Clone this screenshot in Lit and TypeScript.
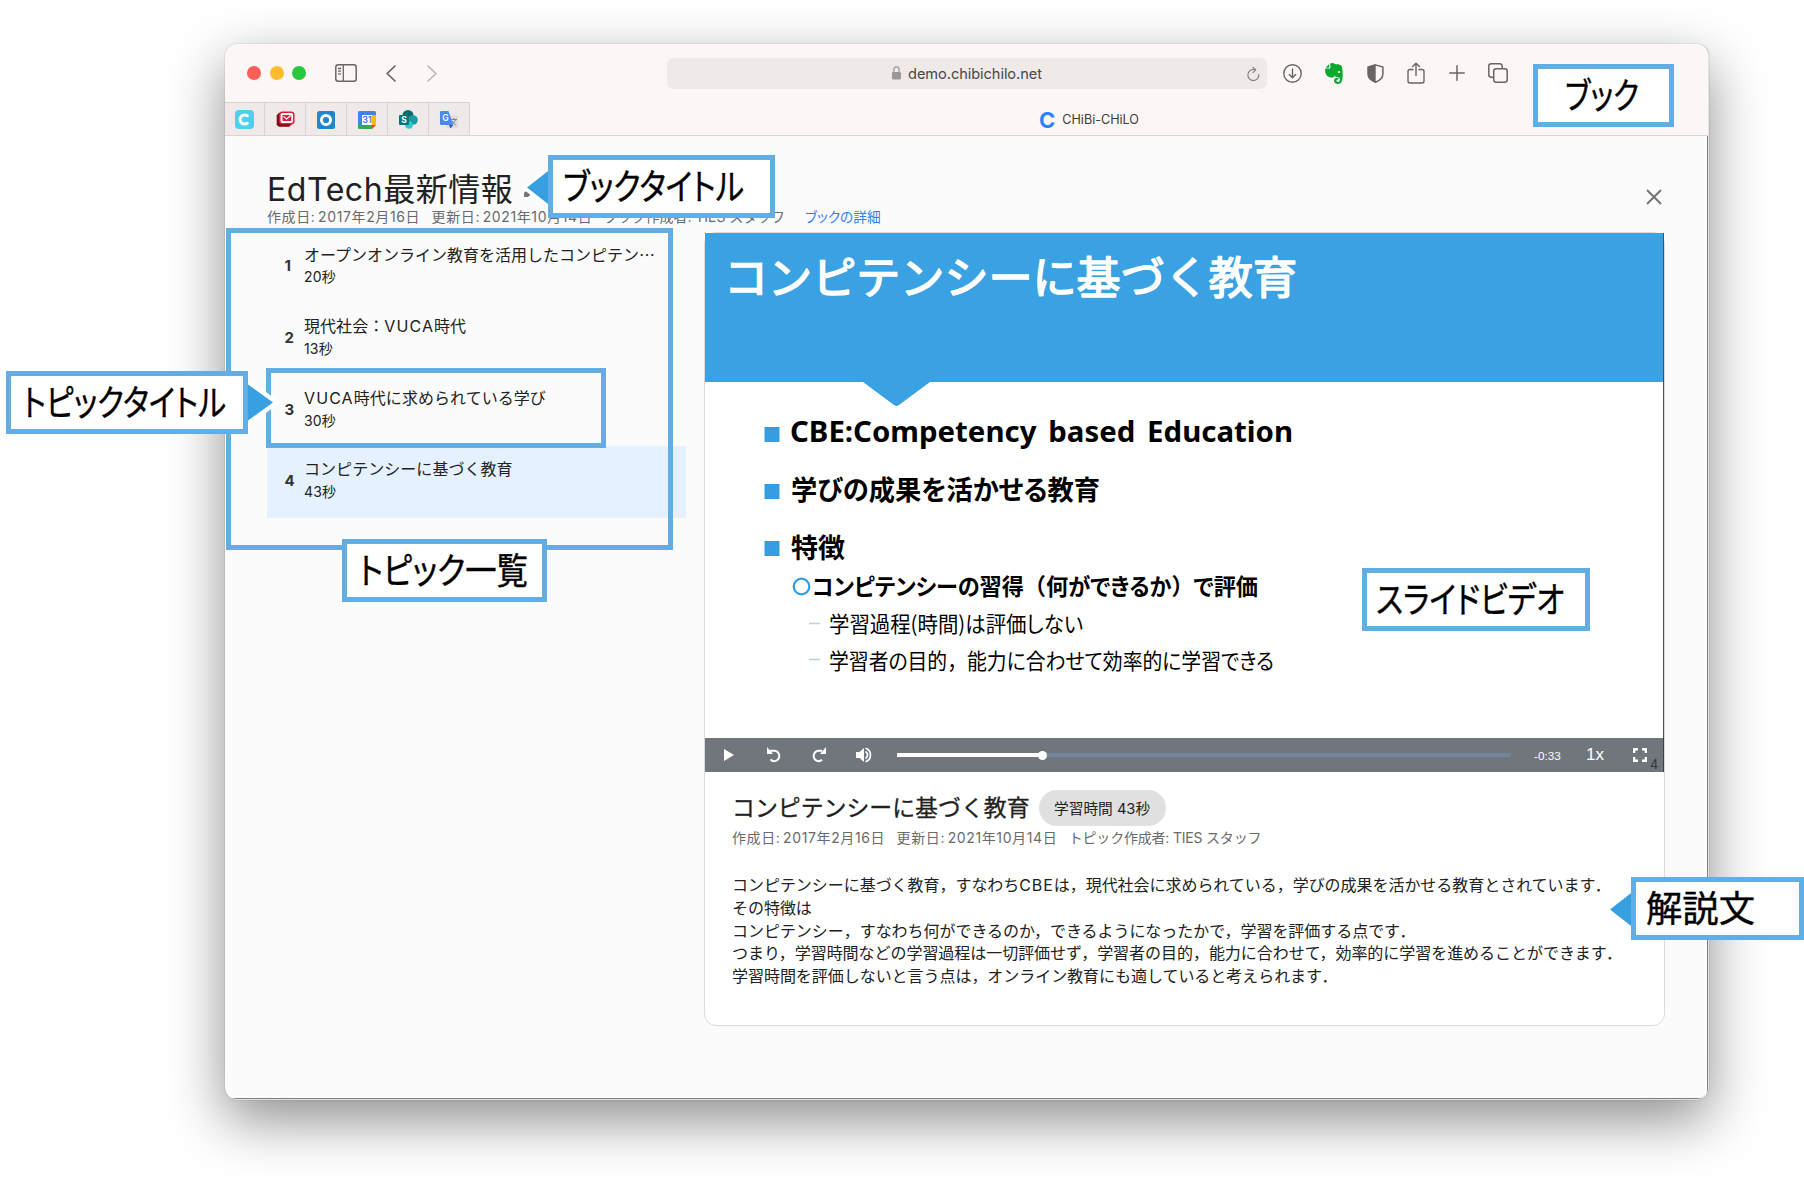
import { LitElement, html, svg, css } from "lit";
import { customElement, property } from "lit/decorators.js";
import { classMap } from "lit/directives/class-map.js";

interface Topic {
  title: string;
  time: string;
}

const TOPICS: Topic[] = [
  { title: "オープンオンライン教育を活用したコンピテン…", time: "20秒" },
  { title: "現代社会：VUCA時代", time: "13秒" },
  { title: "VUCA時代に求められている学び", time: "30秒" },
  { title: "コンピテンシーに基づく教育", time: "43秒" },
];

const DESCRIPTION = [
  "コンピテンシーに基づく教育，すなわちCBEは，現代社会に求められている，学びの成果を活かせる教育とされています．",
  "その特徴は",
  "コンピテンシー，すなわち何ができるのか，できるようになったかで，学習を評価する点です．",
  "つまり，学習時間などの学習過程は一切評価せず，学習者の目的，能力に合わせて，効率的に学習を進めることができます．",
  "学習時間を評価しないと言う点は，オンライン教育にも適していると考えられます．",
];

/* Latin capitals inside Japanese text get a little extra tracking */
const withLatin = (t: string) =>
  t.split(/([A-Z]{2,})/).map((p) => (/^[A-Z]{2,}$/.test(p) ? html`<span class="caps">${p}</span>` : p));

/* Safari window chrome: toolbar, address field and pinned tabs */
@customElement("browser-chrome")
class BrowserChrome extends LitElement {
  static styles = css`
    :host {
      display: block;
      background: #fcf6f6;
      border-bottom: 1px solid #d9d5d5;
      font-family: Inter, "Noto Sans CJK JP", sans-serif;
    }
    svg { display: block; flex: none; overflow: visible; }
    .toolbar { display: flex; align-items: center; height: 58px; padding-left: 22px; }
    .lights { display: flex; gap: 8.700px; margin-right: 29px; }
    .light { width: 14px; height: 14px; border-radius: 50%; }
    .red { background: #fe5f57; }
    .amber { background: #febc2e; }
    .green { background: #28c840; }
    .nav { display: flex; align-items: center; gap: 29px; width: 331.600px; }
    .address {
      box-sizing: border-box;
      display: flex; align-items: center; justify-content: center; position: relative;
      width: 600px; height: 31px; border-radius: 7px; background: #efe9e8;
      color: #4b4747; font-size: 14.600px; gap: 7px;
    }
    .address .host { letter-spacing: -0.060px; padding-top: 2px; }
    .reload { position: absolute; right: 7px; top: 8px; }
    .actions { display: flex; align-items: center; margin-left: 16px; gap: 23.500px; }
    .tabs { display: flex; height: 33px; }
    .pin {
      box-sizing: border-box; display: flex; align-items: center; justify-content: center;
      width: 41px; height: 33px; background: #efe9e8; padding-top: 1px;
      border-top: 1px solid #d8d2d2; border-right: 1px solid #d8d2d2;
    }
    .pin:first-child { width: 40px; padding-right: 1px; }
    .active {
      flex: 1; display: flex; align-items: center; justify-content: center; gap: 7px;
      font-size: 12.600px; color: #3f3c3c; padding-top: 2px;
    }
    .mark { font-weight: 700; font-size: 22px; line-height: 20px; color: #2f80fb; }
  `;

  render() {
    const s = "#6b6464";
    return html`
      <div class="toolbar">
        <div class="lights">
          <div class="light red"></div><div class="light amber"></div><div class="light green"></div>
        </div>
        <div class="nav">
          <svg width="22" height="18" viewBox="0 0 22 18" fill="none" stroke=${s} stroke-width="1.5">
            <rect x=".8" y=".8" width="20.4" height="16.4" rx="2.5" />
            <path d="M8.3 1v16M3 4.5h3M3 7.2h3M3 9.9h3" stroke-width="1.3" />
          </svg>
          <svg width="10" height="17" viewBox="0 0 10 17" fill="none" stroke=${s} stroke-width="1.7" stroke-linecap="round"><path d="M9 1 1.2 8.5 9 16" /></svg>
          <svg width="10" height="17" viewBox="0 0 10 17" fill="none" stroke="#bcb6b6" stroke-width="1.7" stroke-linecap="round"><path d="M3 1l7.800 7.500L3 16" /></svg>
        </div>
        <div class="address">
          <svg width="9" height="14" viewBox="0 0 9 14"><rect x="0" y="6" width="9" height="7.500" rx="1.300" fill="#9c9797" /><path d="M1.900 6.500V3.800a2.600 2.900 0 0 1 5.200 0v2.700" fill="none" stroke="#9c9797" stroke-width="1.200" /></svg>
          <span class="host">demo.chibichilo.net</span>
          <svg class="reload" width="13" height="16" viewBox="0 0 13 16" fill="none" stroke="#827c7c" stroke-width="1.100" stroke-linecap="round"><path d="M11.800 8.200A5.500 5.500 0 1 1 8.200 3.900M5.800 1.400l2.900 2.500-2.700 2.700" /></svg>
        </div>
        <div class="actions">
          <svg width="19" height="19" viewBox="0 0 19 19" fill="none" stroke=${s} stroke-width="1.400" stroke-linecap="round"><circle cx="9.500" cy="9.500" r="8.700" /><path d="M9.500 5v8.500M6.300 10.500l3.200 3.200 3.200-3.200" /></svg>
          <svg width="18" height="21" viewBox="0 0 18 21">
            <path fill="#0aa82f" d="M5.300.600C6.200-.200 9-.200 9.600 1c2 .2 5 .4 6.300 1.200.9.700 1.500 3.400 1.700 6.300.3 4.200-.1 8.300-1 10.300-.8 1.700-2 2.100-3.800 2.100-2.500 0-3.800-1.300-3.800-3.200 0-1.800 1.300-3 3.300-3 .9 0 1.400.3 1.400.8 0 .6-.4.800-1 .9-.8.100-1.300.500-1.300 1.200 0 .8.700 1.300 1.600 1.300 1.300 0 1.900-.9 1.900-2.600 0-1.300-.6-2-1.700-2.100-1.800-.1-2.900-.7-3.400-1.700-.5 1.500-1.500 2.200-3.200 2.100C3.200 14.400.1 12.300.1 7.300c0-1.100.3-1.700 1-1.700h3.300c.6 0 .9-.3.900-.9z" />
            <path fill="#0aa82f" d="M4.200.900.600 4.700h3c.4 0 .600-.2.600-.6z" />
            <ellipse cx="14" cy="9" rx="1.200" ry=".9" fill="#fcf6f6" />
          </svg>
          <svg width="17" height="19" viewBox="0 0 17 19"><path d="M8.500.900 15.900 3v7c0 4.200-3 6.500-7.400 8.200C4.100 16.500 1.100 14.200 1.100 10V3z" fill="none" stroke=${s} stroke-width="1.500" /><path d="M8.700.500v18C4 17 .8 14.500.8 10V2.800z" fill=${s} /></svg>
          <svg width="18" height="22" viewBox="0 0 18 22" fill="none" stroke=${s} stroke-width="1.400" stroke-linecap="round" stroke-linejoin="round"><path d="M6 7.500H3a2 2 0 0 0-2 2V19a2 2 0 0 0 2 2h12a2 2 0 0 0 2-2V9.500a2 2 0 0 0-2-2h-3M9 13.500V1.200M5.500 4.600 9 1.200l3.500 3.400" /></svg>
          <svg width="16" height="16" viewBox="0 0 16 16" stroke=${s} stroke-width="1.500" stroke-linecap="round"><path d="M8 .8v14.400M.8 8h14.400" /></svg>
          <svg width="20" height="20" viewBox="0 0 20 20" fill="none" stroke=${s} stroke-width="1.500"><path d="M5.500 14.200H3.200A2.400 2.400 0 0 1 .8 11.800V3.200A2.400 2.400 0 0 1 3.200.8h8.600a2.400 2.400 0 0 1 2.400 2.400v2.300" /><rect x="5.700" y="5.700" width="13.500" height="13.500" rx="2.400" /></svg>
        </div>
      </div>
      <div class="tabs">
        <div class="pin">
          <svg width="19" height="19" viewBox="0 0 19 19"><rect width="19" height="19" rx="4" fill="#4fd0ea" /><path d="M13.200 6.600A4.600 4.600 0 1 0 13.200 12.400" fill="none" stroke="#fff" stroke-width="3" /></svg>
        </div>
        <div class="pin">
          <svg width="19" height="17" viewBox="0 0 19 17"><path d="M3 1.500.7 4.500v9.500l2.300 1.800h10l2.500-2z" fill="#7c0d18" /><rect x="3.800" y="1.200" width="14" height="11.600" rx="2.500" fill="#fff" stroke="#d8203b" stroke-width="1.500" /><rect x="6.500" y="4" width="8.800" height="6" rx=".8" fill="#d8203b" /><path d="m7.500 5.400 3 2.600 4.200-3.500" fill="none" stroke="#fff" stroke-width="1.200" /></svg>
        </div>
        <div class="pin">
          <svg width="18" height="18" viewBox="0 0 18 18"><rect width="18" height="18" rx="2.500" fill="#2087cf" /><circle cx="9" cy="9" r="4.600" fill="none" stroke="#fff" stroke-width="3" /></svg>
        </div>
        <div class="pin">
          <svg width="18" height="18" viewBox="0 0 18 18"><path d="M1.500 0h15A1.500 1.500 0 0 1 18 1.500V4H0V1.500A1.500 1.500 0 0 1 1.500 0z" fill="#4184f0" /><path d="M0 3h4v11H0z" fill="#4184f0" /><path d="M14 4h4v10h-4z" fill="#fbbc05" /><path d="M0 14h14v4H1.500A1.500 1.500 0 0 1 0 16.500z" fill="#34a853" /><path d="M14 14h4l-4 4z" fill="#ea4335" /><path d="M4 4h10v10H4z" fill="#fff" /><text x="9" y="12.300" text-anchor="middle" font-size="9" font-weight="600" fill="#3575e2">31</text></svg>
        </div>
        <div class="pin">
          <svg width="19" height="19" viewBox="0 0 19 19"><circle cx="9" cy="5.500" r="5.500" fill="#036c70" /><circle cx="14" cy="10" r="4.800" fill="#1a9ba1" /><circle cx="10" cy="15" r="3.800" fill="#37c6d0" /><rect y="5" width="10" height="10" rx="1" fill="#03787c" /><text x="5" y="13" text-anchor="middle" font-size="8.500" font-weight="700" fill="#fff">S</text></svg>
        </div>
        <div class="pin">
          <svg width="18" height="18" viewBox="0 0 18 18"><rect x="6" y="4.500" width="12" height="12.500" rx="1" fill="#dfdde0" /><path d="M11 8.500h6M14 7v1.500M12 14l4-5.500M12 10l4 4.500" stroke="#7d8790" stroke-width="1" fill="none" /><path d="M1.200 0h7.300l4.800 14H1.200A1.200 1.200 0 0 1 0 12.800V1.200A1.200 1.200 0 0 1 1.200 0z" fill="#4a89f3" /><path d="M9 14h4.300L10.300 17.500z" fill="#3b5bb5" /><text x="5.500" y="10.300" text-anchor="middle" font-size="8.500" font-weight="600" fill="#fff">G</text></svg>
        </div>
        <div class="active"><span class="mark">C</span><span>CHiBi-CHiLO</span></div>
      </div>
    `;
  }
}

/* Slide frame of the lecture video */
@customElement("slide-video")
class SlideVideo extends LitElement {
  static styles = css`
    :host { display: block; font-family: "Noto Sans CJK JP", sans-serif; }
    .frame { display: block; }
    .heading { font-size: 44px; font-weight: 400; fill: #fff; stroke: #fff; stroke-width: 1.600px; stroke-linejoin: round; }
    .latin { font-family: "Noto Sans", "Open Sans", sans-serif; font-size: 28px; font-weight: 700; word-spacing: 4px; }
    .point { font-size: 27px; font-weight: 700; font-feature-settings: "palt"; }
    .sub { font-size: 23px; font-weight: 700; font-feature-settings: "palt"; }
    .item { font-size: 21.500px; font-feature-settings: "palt"; }
    .full { font-feature-settings: normal; }
    .bar {
      display: flex; align-items: center; box-sizing: border-box; height: 34px; margin-top: -1px;
      background: #71757c; color: #fff; padding-left: 19px; position: relative;
      font-family: "Liberation Sans", sans-serif; border-right: 1px solid #3c4149;
    }
    .bar svg { display: block; flex: none; }
    .i2 { margin-left: 31px; }
    .i3 { margin-left: 28px; }
    .track { margin-left: 25px; width: 614px; height: 4px; background: #72849f; display: flex; align-items: center; }
    .played { height: 4px; background: #fff; }
    .knob { width: 9px; height: 9px; border-radius: 50%; background: #fff; margin-left: -4px; }
    .remain { margin-left: 23px; width: 52px; font-size: 11.700px; }
    .rate { width: 47px; font-size: 17px; }
    .page { position: absolute; right: 5px; bottom: 0; font-size: 14px; line-height: 15px; color: #33373e; }
  `;

  private line(cls: string, x: number, y: number, w: number, t: string) {
    const parts = t.split(/([（），])/).filter((p) => p !== "");
    return svg`<text class=${cls} x=${x} y=${y} textLength=${w} lengthAdjust="spacingAndGlyphs">${parts.map((p) =>
      /^[（），]$/.test(p) ? svg`<tspan class="full">${p}</tspan>` : svg`<tspan>${p}</tspan>`
    )}</text>`;
  }

  render() {
    return html`
      <svg class="frame" width="959" height="506" viewBox="0 0 959 506">
        <rect width="959" height="506" fill="#fff" />
        <path d="M0 0H959V149H225L194 172Q191.500 174 189 172L158 149H0z" fill="#3aa1e2" />
        ${this.line("heading", 19, 61, 573, "コンピテンシーに基づく教育")}
        <path d="M59.500 194h15v15h-15zM59.500 251h15v15h-15zM59.500 308h15v15h-15z" fill="#349de2" />
        ${this.line("latin", 85, 209, 503, "CBE:Competency based Education")}
        ${this.line("point", 86, 267, 309, "学びの成果を活かせる教育")}
        ${this.line("point", 86, 324.500, 54, "特徴")}
        <circle cx="96.500" cy="353.500" r="7.800" fill="none" stroke="#349de2" stroke-width="2.200" />
        ${this.line("sub", 107, 361.500, 446, "コンピテンシーの習得（何ができるか）で評価")}
        <path d="M104 390.500h11M104 426.500h11" stroke="#b9d2e0" stroke-width="1.500" />
        ${this.line("item", 124, 399, 254, "学習過程(時間)は評価しない")}
        ${this.line("item", 124, 435.500, 445, "学習者の目的，能力に合わせて効率的に学習できる")}
        <path d="M958.500 0V506" stroke="#4b4f54" />
      </svg>
      <div class="bar">
        <svg width="10" height="12" viewBox="0 0 10 12" fill="#fff"><path d="M0 0v12l10-6z" /></svg>
        <svg class="i2" width="17" height="17" viewBox="0 0 17 17" fill="none" stroke="#fff" stroke-width="2"><path d="M5 3.800h5a5 5.200 0 1 1-4.500 8.500" /><path d="M2 0v7h6z" fill="#fff" stroke="none" /></svg>
        <svg class="i3" width="17" height="17" viewBox="0 0 17 17" fill="none" stroke="#fff" stroke-width="2"><path d="M12 3.800H8a5 5.200 0 1 0 4 9" /><path d="M16 0v7h-6z" fill="#fff" stroke="none" /></svg>
        <svg class="i3" width="17" height="16" viewBox="0 0 17 16" fill="#fff"><path d="M1 5v6h3.500L9 15V1L4.500 5z" /><path d="M10.500 4.500a4 4 0 0 1 0 7M10.500 1.300a7 7 0 0 1 0 13.400" fill="none" stroke="#fff" stroke-width="1.700" /></svg>
        <div class="track"><div class="played" style="width:${(145 / 614) * 100}%"></div><div class="knob"></div></div>
        <div class="remain">-0:33</div>
        <div class="rate">1x</div>
        <svg width="14" height="14" viewBox="0 0 14 14" fill="none" stroke="#fff" stroke-width="2.400"><path d="M1.200 5V1.200H5M9 1.200h3.800V5M12.800 9v3.800H9M5 12.800H1.200V9" /></svg>
        <span class="page">4</span>
      </div>
    `;
  }
}

/* Bordered annotation label with an optional pointer */
@customElement("callout-label")
class CalloutLabel extends LitElement {
  @property() text = "";
  @property({ type: Number }) w = 100;
  @property({ type: Number }) tx = 16;
  @property({ type: Number }) tw = 80;
  @property() pointer: "" | "left" | "right" = "";
  @property({ type: Boolean }) halo = false;

  static styles = css`
    :host { display: block; }
    svg { display: block; overflow: visible; }
    text {
      font-family: "Noto Sans CJK JP", sans-serif; font-size: 36px; font-feature-settings: "palt";
      fill: #000; stroke: #000; stroke-width: 0.400px;
    }
  `;

  render() {
    const w = this.w;
    return html`<svg width=${w} height="63" viewBox="0 0 ${w} 63">
      ${this.pointer === "left"
        ? svg`${this.halo ? svg`<path d="M2 10-27 32.500 2 55z" fill="#fff" />` : ""}<path d="M2 14.500-21 32.500 2 50.500z" fill="#36a0e1" />`
        : ""}
      ${this.pointer === "right"
        ? svg`${this.halo ? svg`<path d="M${w - 2} 6 ${w + 32} 31.500 ${w - 2} 57z" fill="#fff" />` : ""}<path d="M${w - 2} 12 ${w + 25} 31.500 ${w - 2} 51z" fill="#36a0e1" />`
        : ""}
      <rect x="2.500" y="2.500" width=${w - 5} height="58" fill="#fff" stroke="#61ade4" stroke-width="5" />
      <text x=${this.tx} y="44.500" textLength=${this.tw} lengthAdjust="spacingAndGlyphs">${this.text}</text>
    </svg>`;
  }
}

@customElement("app-root")
class AppRoot extends LitElement {
  static styles = css`
    :host {
      display: block; position: relative; width: 1804px; height: 1184px; overflow: hidden;
      background: #fff; color: #212121; box-sizing: border-box; padding: 44px 0 0 225px;
      font-family: Inter, "Noto Sans CJK JP", sans-serif;
    }
    .window {
      box-sizing: border-box; width: 1484px; height: 1056px; border-radius: 12px; overflow: hidden;
      background: #fbfbfb; border-right: 1px solid #e3e3e3; border-bottom: 1px solid #e3e3e3;
      box-shadow: 0 0 1px rgba(0, 0, 0, 0.500), 0 20px 56px rgba(0, 0, 0, 0.450);
    }
    .page {
      box-sizing: border-box; height: 963px; padding: 31px 42px 0 42px;
      border-right: 1px solid #7d7f80; border-bottom: 1px solid #7d7f80; border-bottom-right-radius: 8px;
    }
    .head { display: flex; justify-content: space-between; height: 66px; }
    h1 { margin: 0; font-size: 32px; line-height: 46px; font-weight: 400; display: flex; align-items: center; gap: 11px; letter-spacing: 0.550px; }
    h1 svg { margin-top: -9px; }
    .meta { display: flex; gap: 12px; font-size: 14px; line-height: 18px; color: #6a6a6a; white-space: pre; margin-top: -5px; }
    .date { letter-spacing: 0.620px; word-spacing: -2px; margin-right: -0.600px; }
    .author { letter-spacing: -0.050px; }
    .topic-author { letter-spacing: -0.200px; }
    .link { color: #2c80f6; font-size: 13.700px; font-feature-settings: "palt"; margin-left: 8px; }
    .close { margin: 22px 3px 0 0; }
    .body { display: grid; grid-template-columns: 419px 961px; column-gap: 18px; align-items: start; }
    .topics { list-style: none; margin: -1.700px 0 0; padding: 0; }
    .topic { box-sizing: border-box; display: grid; grid-template-columns: 37px 1fr; height: 71.600px; padding: 11px 20px 0 0; }
    .selected { background: #e5f1fe; }
    .num { font-size: 15px; font-weight: 700; line-height: 48px; padding-left: 17.500px; color: #333; }
    .title { font-size: 16px; line-height: 24px; white-space: nowrap; letter-spacing: 0.050px; }
    .title .caps { letter-spacing: 1.100px; }
    .long { font-family: "Noto Sans CJK JP", sans-serif; letter-spacing: 0; }
    .time { font-size: 14px; line-height: 20px; padding-top: 1px; letter-spacing: 0.150px; }
    .card {
      box-sizing: border-box; height: 794px; border: 1px solid #dadada; border-radius: 12px;
      background: #fff; margin-top: -1px;
    }
    .detail { padding: 18px 27px; }
    .headline { display: flex; align-items: center; gap: 9px; height: 36px; }
    h2 { margin: -1px 0 0; font-size: 22.900px; font-weight: 400; line-height: 36px; -webkit-text-stroke: 0.300px #212121; }
    .chip { display: flex; align-items: center; justify-content: center; box-sizing: border-box; padding-bottom: 2px; width: 127px; height: 36px; border-radius: 18px; background: #e0e0e0; font-size: 14.700px; }
    .detail .meta { margin-top: 3px; }
    .text { margin-top: 27px; font-size: 16px; line-height: 22.800px; letter-spacing: -0.040px; }
    .text .caps { letter-spacing: 0.900px; }
    .line { white-space: nowrap; }
    .mark { position: absolute; }
    .frame { box-sizing: border-box; border: 5px solid #61ade4; }
    .list-frame { left: 226px; top: 228px; width: 447px; height: 322px; }
    .topic-frame { left: 266px; top: 368px; width: 340px; height: 80px; }
    .m-book { left: 1533px; top: 64px; }
    .m-title { left: 548px; top: 155px; }
    .m-topic { left: 6px; top: 371px; }
    .m-list { left: 342px; top: 539px; }
    .m-video { left: 1362px; top: 568px; }
    .m-text { left: 1631px; top: 877px; }
  `;

  render() {
    return html`
      <div class="window">
        <browser-chrome></browser-chrome>
        <div class="page">
          <div class="head">
            <div>
              <h1>EdTech最新情報
                <svg width="22" height="22" viewBox="0 0 22 22" fill="#757575"><path d="M0 18v4h4L16 10l-4-4zM19 7l-4-4 2-2 4 4z" /></svg>
              </h1>
              <div class="meta">
                <span class="date">作成日: 2017年2月16日</span><span class="date">更新日: 2021年10月14日</span><span class="author">ブック作成者: TIES スタッフ</span><span class="link">ブックの詳細</span>
              </div>
            </div>
            <svg class="close" width="16" height="16" viewBox="0 0 16 16" stroke="#757575" stroke-width="2"><path d="m1 1 14 14M15 1 1 15" /></svg>
          </div>
          <div class="body">
            <ol class="topics">
              ${TOPICS.map(
                (t, i) => html`<li class=${classMap({ topic: true, selected: i === 3 })}>
                  <span class="num">${i + 1}</span>
                  <div>
                    <div class=${classMap({ title: true, long: i === 0 })}>${withLatin(t.title)}</div>
                    <div class="time">${t.time}</div>
                  </div>
                </li>`
              )}
            </ol>
            <div class="card">
              <slide-video></slide-video>
              <div class="detail">
                <div class="headline"><h2>コンピテンシーに基づく教育</h2><span class="chip">学習時間 43秒</span></div>
                <div class="meta">
                  <span class="date">作成日: 2017年2月16日</span><span class="date">更新日: 2021年10月14日</span><span class="topic-author">トピック作成者: TIES スタッフ</span>
                </div>
                <div class="text">${DESCRIPTION.map((l) => html`<div class="line">${withLatin(l)}</div>`)}</div>
              </div>
            </div>
          </div>
        </div>
      </div>
      <div class="mark frame list-frame"></div>
      <div class="mark frame topic-frame"></div>
      <callout-label class="mark m-book" text="ブック" w="141" tx="32" tw="74"></callout-label>
      <callout-label class="mark m-title" text="ブックタイトル" w="227" tx="15" tw="181" pointer="left" halo></callout-label>
      <callout-label class="mark m-topic" text="トピックタイトル" w="242" tx="17" tw="203" pointer="right" halo></callout-label>
      <callout-label class="mark m-list" text="トピック一覧" w="205" tx="17" tw="169"></callout-label>
      <callout-label class="mark m-video" text="スライドビデオ" w="228" tx="14" tw="188"></callout-label>
      <callout-label class="mark m-text" text="解説文" w="173" tx="15" tw="109" pointer="left"></callout-label>
    `;
  }
}
